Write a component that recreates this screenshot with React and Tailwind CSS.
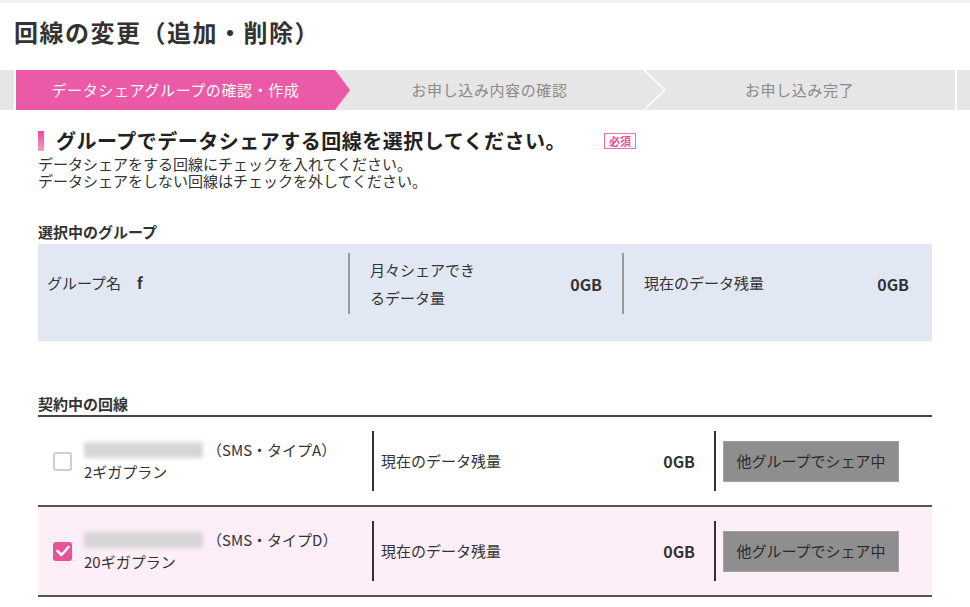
import React from 'react';

// --- Data ---
const lines = [
  { type: 'SMS・タイプA', plan: '2ギガプラン', remain: '0GB', checked: false },
  { type: 'SMS・タイプD', plan: '20ギガプラン', remain: '0GB', checked: true },
];

// --- Main App Component ---
export default function App() {
  return (
    <div className="w-[970px] min-h-[607px] bg-white border-t-[3px] border-[#f1f1f1] font-['Noto_Sans_CJK_JP',sans-serif] text-[#333]">
      <h1 className="pt-[13px] pl-[14px] text-[24px] leading-[32px] font-bold tracking-[1.5px] text-[#333]">
        回線の変更（追加・削除）
      </h1>
      <StepBar />

      <div className="px-[38px]">
        <div className="mt-[19px] flex items-center">
          <span className="w-[6px] h-[20px] bg-gradient-to-b from-[#e8489a] to-[#f39bc8]" />
          <h2 className="ml-[12px] text-[20px] leading-[24px] font-bold tracking-[0.5px] text-[#222]">
            グループでデータシェアする回線を選択してください。
          </h2>
          <span className="ml-[38px] border border-[#ee6fae] px-[4px] text-[11px] leading-[14px] font-bold text-[#e8509a]">
            必須
          </span>
        </div>
        <div className="mt-[2px] text-[15px] leading-[17px]">
          <p>データシェアをする回線にチェックを入れてください。</p>
          <p>データシェアをしない回線はチェックを外してください。</p>
        </div>

        <h3 className="mt-[33px] mb-[2px] text-[15px] leading-[20px] font-bold">選択中のグループ</h3>
        <GroupBox />

        <h3 className="mt-[53px] text-[15px] leading-[20px] font-bold border-b-2 border-[#444] pb-[1px]">
          契約中の回線
        </h3>
        {lines.map((line, i) => (
          <LineRow key={i} line={line} />
        ))}
      </div>
    </div>
  );
}

// --- UI Components ---

const StepBar = () => (
  <div className="mt-[22px] flex h-[40px] bg-[#e6e6e6] text-[15px] tracking-[0.6px] overflow-hidden">
    <div className="w-[14px] shrink-0" />
    <div className="w-[2px] shrink-0 bg-white" />
    <div className="relative z-10 w-[334px] shrink-0 flex items-center justify-center pr-[15px] bg-[#ea5aa6] text-white [clip-path:polygon(0_0,calc(100%-15px)_0,100%_50%,calc(100%-15px)_100%,0_100%)]">
      データシェアグループの確認・作成
    </div>
    <div className="-ml-[15px] w-[309px] shrink-0 flex items-center justify-center text-[#8a8a8a]">
      お申し込み内容の確認
    </div>
    <svg className="shrink-0 -mr-[22px] relative z-10" width="22" height="40" viewBox="0 0 22 40">
      <polyline points="0,0 21,20 0,40" fill="none" stroke="#ffffff" strokeWidth="1.5" />
    </svg>
    <div className="w-[311px] shrink-0 flex items-center justify-center text-[#8a8a8a]">お申し込み完了</div>
    <div className="w-[2px] shrink-0 bg-white" />
    <div className="flex-1" />
  </div>
);

const GroupBox = () => (
  <div className="bg-[#e2e7f4] pt-[9px] pb-[27px] text-[15px]">
    <div className="flex h-[61px]">
      <div className="w-[310px] flex items-center pl-[9px]">
        グループ名<span className="ml-[16px] font-bold">f</span>
      </div>
      <div className="w-[274px] flex items-center justify-between border-l-2 border-[#9a9a9a] pl-[20px] pr-[20px]">
        <span className="w-[108px] leading-[28px]">月々シェアできるデータ量</span>
        <span className="text-[16px] font-bold">0GB</span>
      </div>
      <div className="flex-1 flex items-center justify-between border-l-2 border-[#9a9a9a] pl-[20px] pr-[23px]">
        <span>現在のデータ残量</span>
        <span className="text-[16px] font-bold">0GB</span>
      </div>
    </div>
  </div>
);

const Checkbox = ({ checked }) =>
  checked ? (
    <span className="w-[19px] h-[19px] rounded-[3px] bg-[#e8509a] flex items-center justify-center">
      <svg width="14" height="12" viewBox="0 0 14 12">
        <polyline points="1.5,6 5.5,10 12.5,2" fill="none" stroke="#fff" strokeWidth="2.6" strokeLinecap="round" strokeLinejoin="round" />
      </svg>
    </span>
  ) : (
    <span className="w-[19px] h-[19px] rounded-[3px] border-2 border-[#cfcfcf] bg-white" />
  );

const LineRow = ({ line }) => (
  <div className={`flex pt-[14px] pb-[14px] border-b-2 border-[#555] text-[15px] ${line.checked ? 'bg-[#fdeef7]' : ''}`}>
    <div className="w-[334px] flex items-center pl-[15px]">
      <Checkbox checked={line.checked} />
      <div className="ml-[12px] leading-[22px]">
        <div className="flex items-center">
          <span className="w-[119px] h-[16px] bg-[#d6d6d6] blur-[2px]" />
          <span className="ml-[4px]">（{line.type}）</span>
        </div>
        <div>{line.plan}</div>
      </div>
    </div>
    <div className="w-[342px] h-[60px] flex items-center justify-between border-l-2 border-[#333] pl-[7px] pr-[19px]">
      <span>現在のデータ残量</span>
      <span className="text-[16px] font-bold">{line.remain}</span>
    </div>
    <div className="flex-1 h-[60px] flex items-center border-l-2 border-[#333] pl-[7px]">
      <button className="w-[176px] h-[41px] bg-[#8e8e8e] border border-[#a0a0a0] text-[15px] text-[#2a2a2a]">
        他グループでシェア中
      </button>
    </div>
  </div>
);
